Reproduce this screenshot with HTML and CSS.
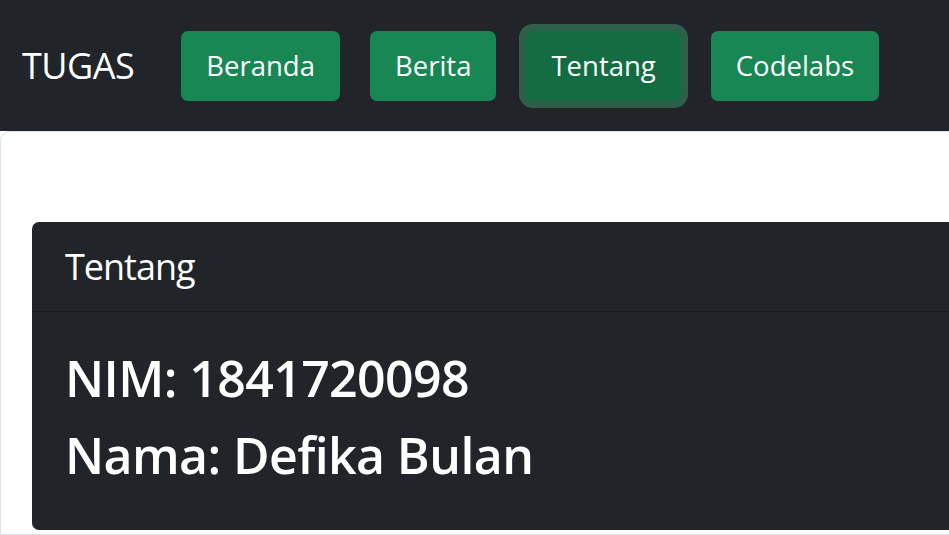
FILE: index.html
```html
<!DOCTYPE html>
<html lang="id">
<head>
<meta charset="utf-8">
<title>TUGAS</title>
<link rel="stylesheet" href="styles.css">
</head>
<body>
<nav class="navbar">
  <a class="brand" href="#">TUGAS</a>
  <div class="nav-buttons">
    <a class="btn" href="#">Beranda</a>
    <a class="btn" href="#">Berita</a>
    <a class="btn btn-active" href="#">Tentang</a>
    <a class="btn" href="#">Codelabs</a>
  </div>
</nav>
<main class="page-card">
  <section class="card">
    <div class="card-header">Tentang</div>
    <div class="card-body">
      <h3 class="info">NIM: 1841720098</h3>
      <h3 class="info">Nama: Defika Bulan</h3>
    </div>
  </section>
</main>
</body>
</html>
```

FILE: styles.css
```css
html, body {
  margin: 0;
  padding: 0;
  overflow: hidden;
  background: #ffffff;
}
body {
  width: 949px;
  height: 535px;
  font-family: "Open Sans", "Noto Sans", sans-serif;
  color: #ffffff;
}
.navbar {
  height: 131px;
  background: #212529;
  display: flex;
  align-items: center;
  padding-left: 22px;
  box-sizing: border-box;
}
.brand {
  color: #ffffff;
  text-decoration: none;
  font-size: 36px;
  line-height: 1.5;
  letter-spacing: -0.5px;
  margin-right: 47px;
}
.nav-buttons {
  display: flex;
  gap: 30px;
  align-items: center;
}
.btn {
  display: block;
  color: #ffffff;
  text-decoration: none;
  background: #198754;
  border: 2px solid #198754;
  border-radius: 7px;
  font-size: 27.5px;
  line-height: 42px;
  padding: 12px 23px;
  white-space: nowrap;
}
.btn-active {
  background: #146c43;
  border-color: #146c43;
  box-shadow: 0 0 0 7px rgba(60, 153, 110, 0.5);
}
.page-card {
  display: block;
  width: 1200px;
  border: 1px solid #dee2e6;
  border-radius: 10px 0 0 0;
  padding: 90px 0 0 31px;
  box-sizing: border-box;
  height: 404px;
  background: #ffffff;
}
.card {
  background: #212529;
  border-radius: 7px;
  width: 1300px;
  height: 308px;
  overflow: hidden;
}
.card-header {
  font-size: 36px;
  line-height: 57px;
  letter-spacing: -1px;
  padding: 16px 33px 16px 33px;
  border-bottom: 1px solid rgba(0, 0, 0, 0.2);
}
.card-body {
  padding: 35px 33px 0 33px;
}
.info {
  margin: 0 0 15px 0;
  font-size: 50px;
  line-height: 62px;
  font-weight: 600;
  letter-spacing: -0.6px;
}
```
